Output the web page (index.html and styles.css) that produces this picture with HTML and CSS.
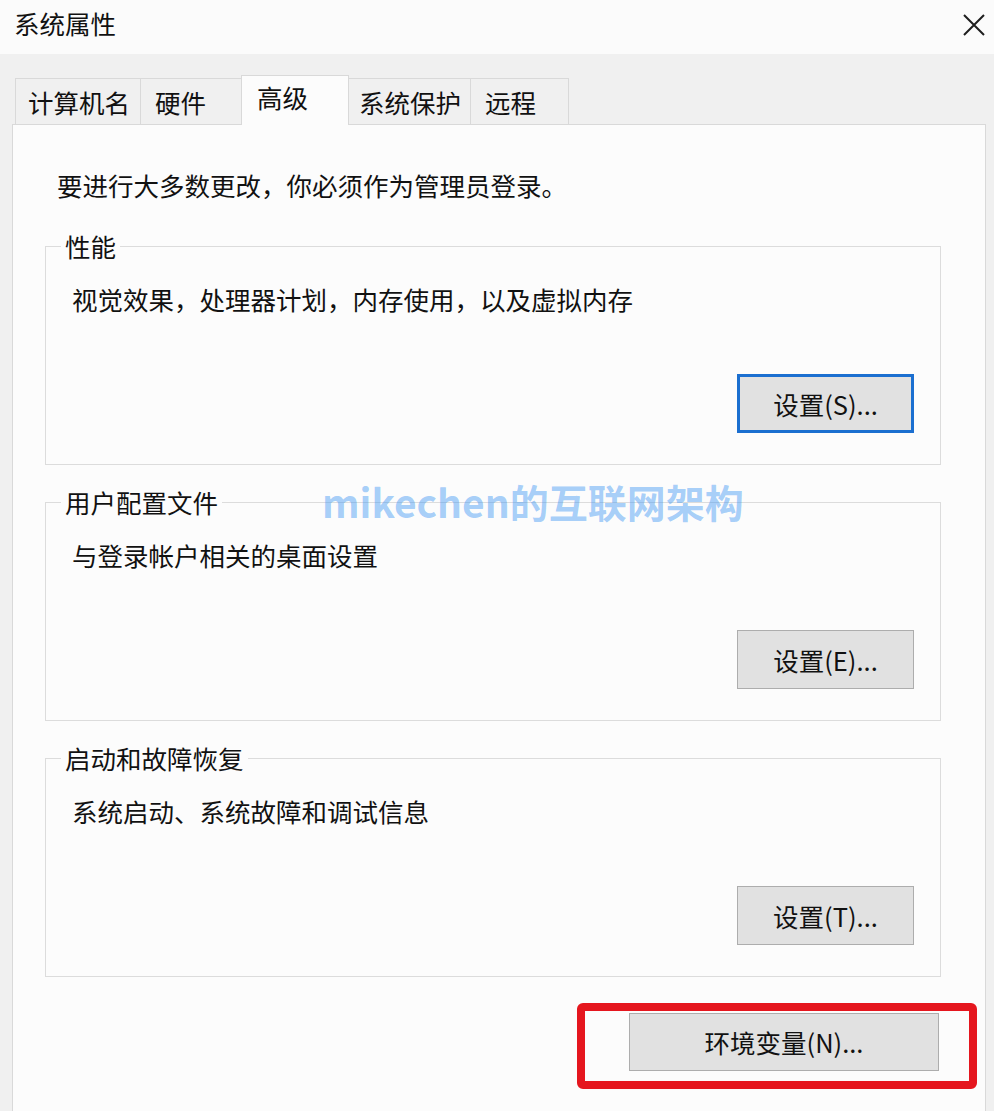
FILE: index.html
```html
<!DOCTYPE html>
<html lang="zh-CN">
<head>
<meta charset="utf-8">
<title>系统属性</title>
<link rel="stylesheet" href="styles.css">
</head>
<body>
<div class="window">
  <header class="titlebar">
    <span class="title">系统属性</span>
    <button class="close" aria-label="关闭">
      <svg width="22" height="22" viewBox="0 0 22 22"><path d="M1 1 L21 21 M21 1 L1 21" stroke="#1e1e1e" stroke-width="2" fill="none"/></svg>
    </button>
  </header>
  <main class="main">
    <nav class="tabs">
      <div class="tab t1">计算机名</div>
      <div class="tab t2">硬件</div>
      <div class="tab t3 active">高级</div>
      <div class="tab t4">系统保护</div>
      <div class="tab t5">远程</div>
    </nav>
    <section class="panel">
      <p class="intro">要进行大多数更改，你必须作为管理员登录。</p>
      <fieldset class="group">
        <legend>性能</legend>
        <div class="group-body">
          <p class="desc">视觉效果，处理器计划，内存使用，以及虚拟内存</p>
          <button class="btn focus">设置(S)...</button>
        </div>
      </fieldset>
      <fieldset class="group">
        <legend>用户配置文件</legend>
        <div class="group-body">
          <p class="desc">与登录帐户相关的桌面设置</p>
          <button class="btn">设置(E)...</button>
        </div>
      </fieldset>
      <fieldset class="group">
        <legend>启动和故障恢复</legend>
        <div class="group-body">
          <p class="desc">系统启动、系统故障和调试信息</p>
          <button class="btn">设置(T)...</button>
        </div>
      </fieldset>
      <div class="actions">
        <div class="highlight">
          <button class="btn env">环境变量(N)...</button>
        </div>
      </div>
      <div class="watermark">mikechen的互联网架构</div>
    </section>
  </main>
</div>
</body>
</html>
```

FILE: styles.css
```css
html, body {
  margin: 0;
  padding: 0;
  overflow: hidden;
}
body {
  background: #f0f0f0;
  font-family: "Noto Sans CJK SC", "Noto Sans", sans-serif;
  color: #111;
  font-size: 25.5px;
}
.window {
  width: 994px;
  height: 1111px;
  overflow: hidden;
}
.titlebar {
  height: 54px;
  background: #fbfbfb;
  display: flex;
  align-items: center;
  justify-content: space-between;
  padding: 0 9px 8px 14px;
  box-sizing: border-box;
}
.title {
  font-size: 25.5px;
  line-height: 1;
}
.close {
  border: 0;
  background: transparent;
  padding: 0;
  width: 22px;
  height: 22px;
  display: flex;
  margin-top: 4px;
}
.main {
  padding: 21px 8px 0 12px;
}
.tabs {
  display: flex;
  align-items: flex-end;
  margin-left: 3px;
}
.tab {
  box-sizing: border-box;
  height: 46px;
  border: 1px solid #d9d9d9;
  border-bottom: none;
  background: #f0f0f0;
  display: flex;
  align-items: center;
  padding-left: 12px;
  line-height: 1;
  margin-left: -1px;
  white-space: nowrap;
}
.t1 { width: 126px; margin-left: 0; }
.t2 { width: 102px; padding-left: 14px; }
.t3 { width: 108px; }
.t4 { width: 123px; padding-left: 10px; }
.t5 { width: 99px; padding-left: 14px; }
.tab.active {
  height: 50px;
  background: #fcfcfc;
  margin-bottom: -1px;
  padding-left: 15px;
  padding-bottom: 8px;
  position: relative;
  z-index: 1;
}
.panel {
  position: relative;
  background: #fcfcfc;
  border: 1px solid #d9d9d9;
  padding: 47px 44px 60px 32px;
}
.intro {
  margin: 0 0 0 12px;
  line-height: 26px;
}
.group {
  margin: 24px 0 0;
  padding: 0;
  border: 1px solid #dcdcdc;
  min-width: 0;
}
.intro + .group {
  margin-top: 35px;
}
.group legend {
  margin-left: 15px;
  padding: 0 4px;
  line-height: 26px;
}
.group-body {
  display: flex;
  flex-direction: column;
  padding: 27px 26px 31px 26px;
}
.desc {
  margin: 0;
  line-height: 26px;
}
.btn {
  font: inherit;
  color: #111;
  box-sizing: border-box;
  width: 177px;
  height: 59px;
  background: #e1e1e1;
  border: 1px solid #adadad;
  padding: 0;
  line-height: 1;
  align-self: flex-end;
  margin-top: 62px;
}
.btn.focus {
  border: 3px solid #1b6fd0;
}
.actions {
  display: flex;
  justify-content: flex-end;
  margin: 26px -36px 0 0;
}
.highlight {
  border: 8px solid #e5161e;
  border-radius: 6px;
  padding: 2px 30px 10px 44px;
}
.btn.env {
  width: 310px;
  height: 58px;
  margin-top: 0;
  display: block;
}
.watermark {
  position: absolute;
  left: 309px;
  top: 357px;
  font-size: 39px;
  font-weight: 700;
  line-height: 1;
  color: rgba(60, 150, 245, 0.45);
  white-space: nowrap;
  pointer-events: none;
}
```
